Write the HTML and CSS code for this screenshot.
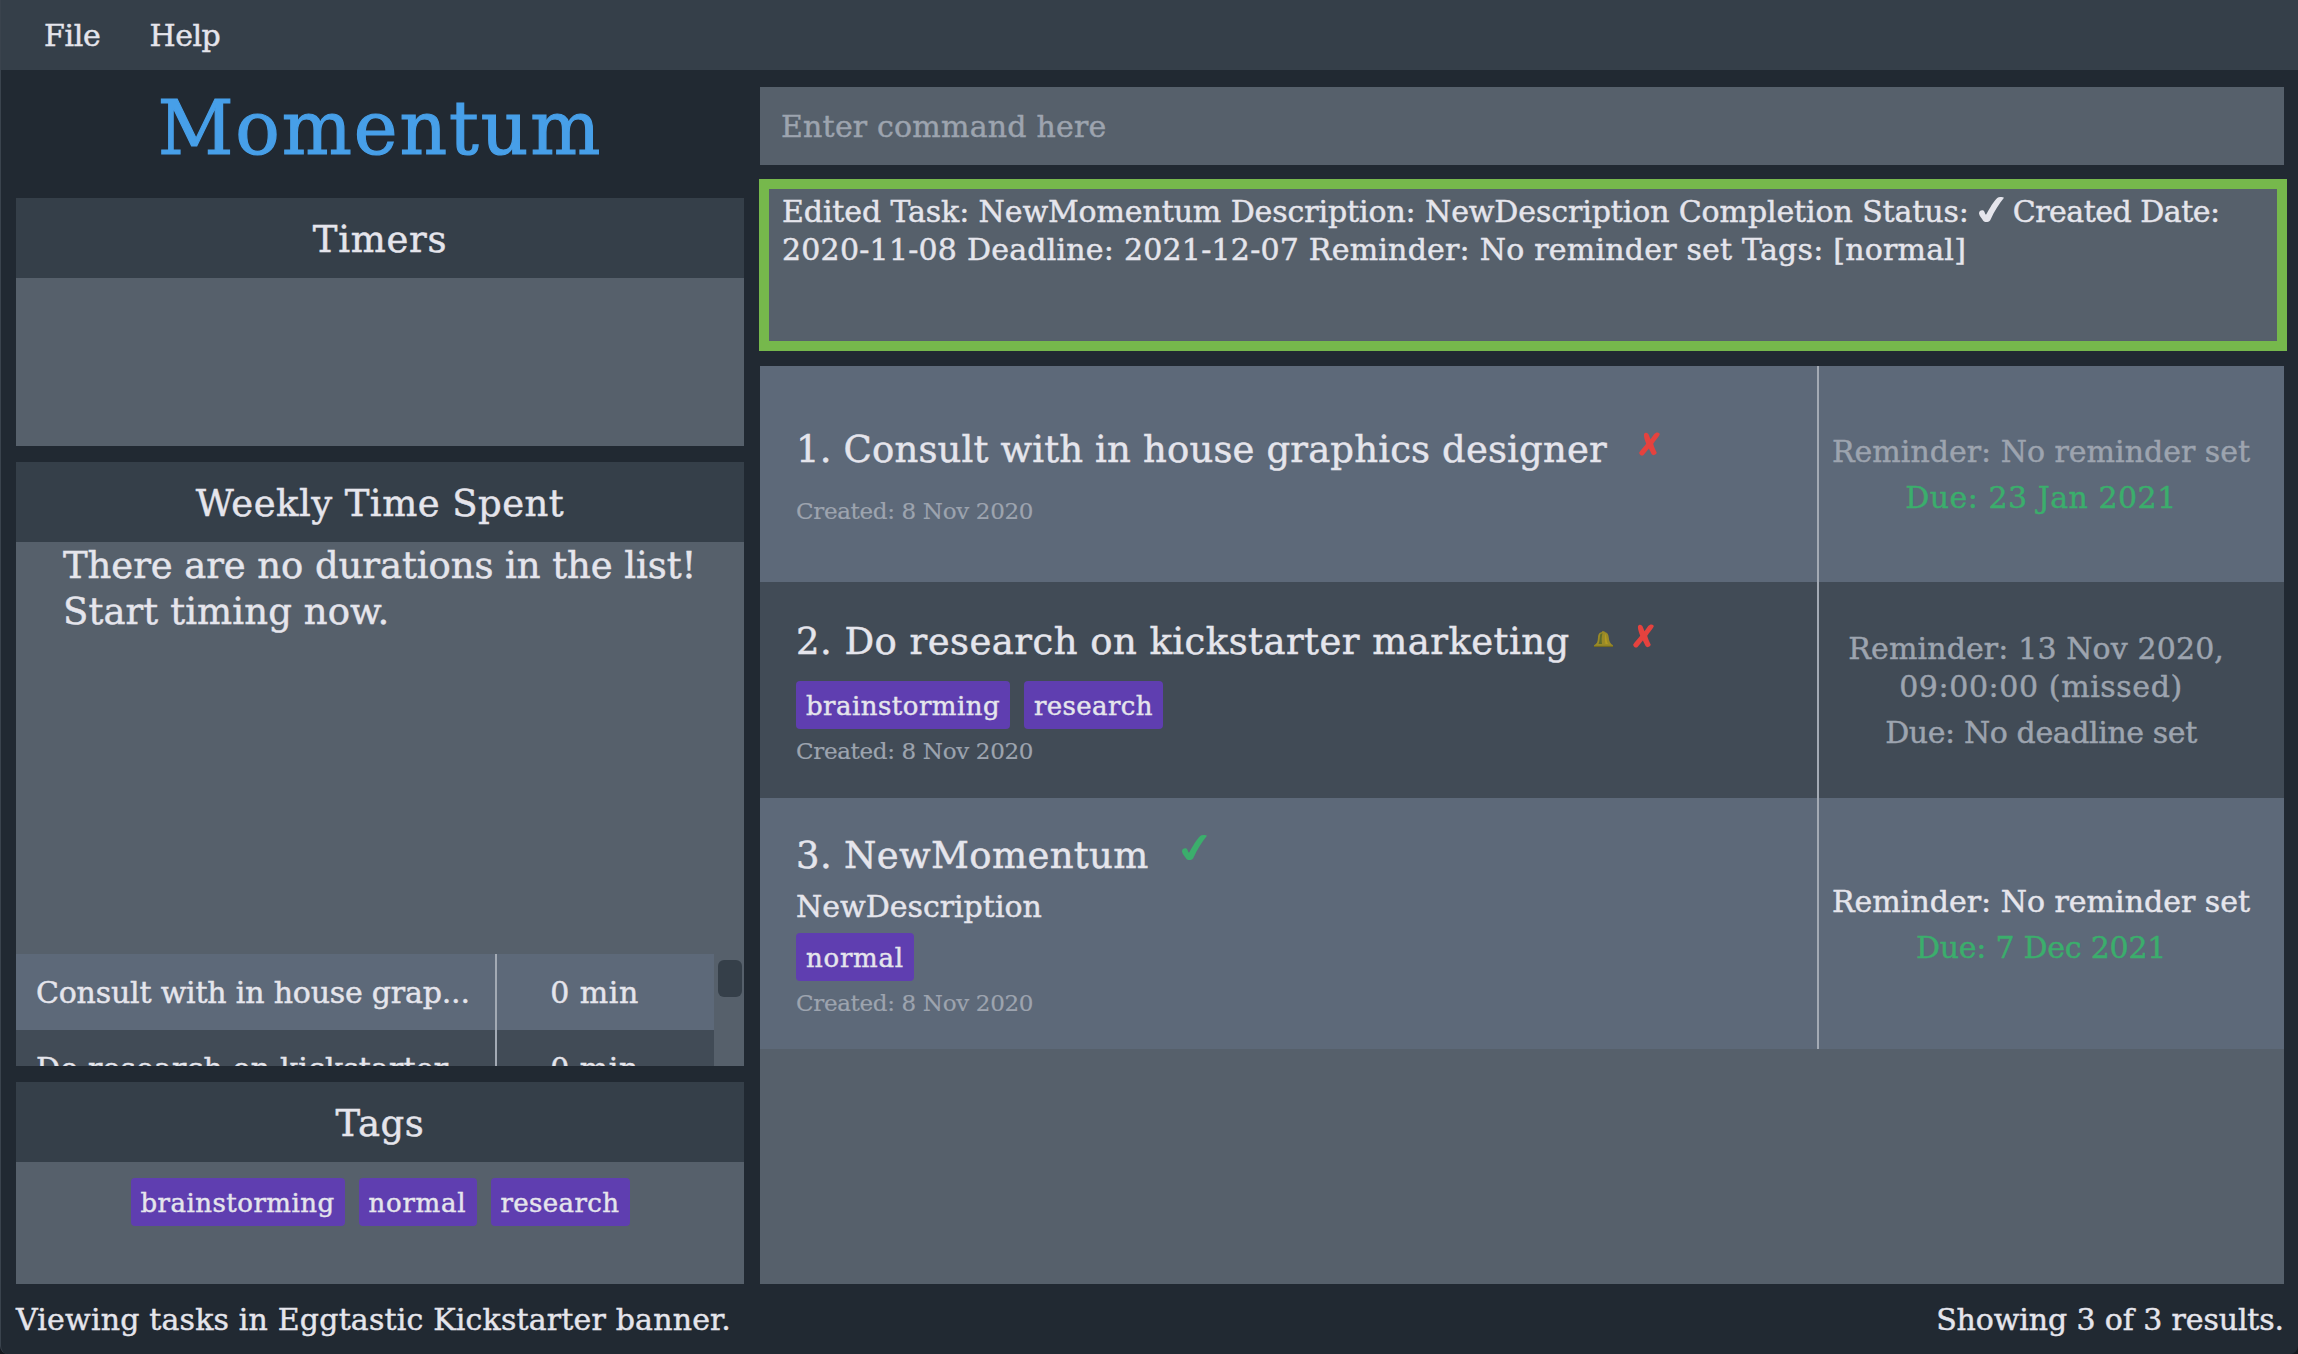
FILE: index.html
```html
<!DOCTYPE html>
<html lang="en">
<head>
<meta charset="utf-8">
<title>Momentum</title>
<link rel="stylesheet" href="styles.css">
</head>
<body>
<svg class="defs" aria-hidden="true">
  <symbol id="cross" viewBox="0 0 21 24"><path d="M5 2.2 C6.5 -.4 9.200 .8 10 3.500 L11.500 7.200 L15.200 2 C17.200 -.6 21 .2 20.700 2.500 C20.500 3.500 16 9 14.200 11.800 C14.800 14.600 16.200 17.300 17.700 20.500 C17.800 22.800 14 24.300 12.600 22 C11.600 20 10.500 18 9.900 16.500 L4.600 23 C2.900 24.700 0 22.500 .2 20.500 C2 17.500 5.500 14.500 7.200 11.800 C6.200 9 4.500 5 5 2.200 Z"/></symbol>
  <symbol id="tick" viewBox="0 0 25 25"><path d="M0 16.500 C-.2 13.200 4.300 12.200 5.400 14.800 C6 16.400 6.300 17.300 7 17.800 C10.500 11.500 14.500 4.500 18.200 1 C19.800 -.3 23.500 -.3 25 .7 C20 6.500 15.500 14 11.600 22.500 C10.400 25.500 5.500 25.900 4.200 23.700 C2.700 21 .2 18.800 0 16.500 Z"/></symbol>
</svg>
<div class="window">
  <nav class="menu"><span class="menu-file">File</span><span class="menu-help">Help</span></nav>
  <div class="main">
    <aside class="left">
      <h1 class="logo">Momentum</h1>
      <section class="panel timers">
        <h2 class="heading heading-timers">Timers</h2>
        <div class="panel-body"></div>
      </section>
      <section class="panel weekly">
        <h2 class="heading heading-weekly">Weekly Time Spent</h2>
        <div class="panel-body">
          <p class="empty"><span class="empty-first">There are no durations in the list!</span><br>Start timing now.</p>
          <div class="durations">
            <div class="duration-rows">
              <div class="duration"><span class="duration-name name-consult">Consult with in house grap...</span><span class="duration-time">0 min</span></div>
              <div class="duration dark"><span class="duration-name name-research">Do research on kickstarter...</span><span class="duration-time">0 min</span></div>
            </div>
            <div class="scroll"><div class="thumb"></div></div>
          </div>
        </div>
      </section>
      <section class="panel tags">
        <h2 class="heading heading-tags">Tags</h2>
        <div class="panel-body tag-list">
          <span class="tag tag-brainstorming">brainstorming</span><span class="tag tag-normal">normal</span><span class="tag tag-research">research</span>
        </div>
      </section>
    </aside>
    <main class="right">
      <div class="command">Enter command here</div>
      <div class="result"><span class="result-a">Edited Task: NewMomentum Description: NewDescription Completion Status:</span><svg class="result-tick"><use href="#tick"/></svg><span class="result-b">Created Date:</span><br><span class="result-c">2020-11-08 Deadline: 2021-12-07 Reminder: No reminder set Tags: [normal]</span></div>
      <div class="tasks">
        <article class="task task-one">
          <div class="info">
            <div class="title"><span class="title-one">1. Consult with in house graphics designer</span><svg class="cross cross-one"><use href="#cross"/></svg></div>
            <div class="created">Created: 8 Nov 2020</div>
          </div>
          <div class="side"><span class="reminder">Reminder: No reminder set</span><span class="due due-jan">Due: 23 Jan 2021</span></div>
        </article>
        <article class="task task-two dark">
          <div class="info">
            <div class="title"><span class="title-two">2. Do research on kickstarter marketing</span>
              <svg class="bell" viewBox="0 0 19 16"><path fill="#9a8a27" d="M0 16 V14.200 C3 13 3.800 10.500 4 6.500 C4.200 2.500 6 1.200 8 1 V.2 H10.500 V1 C13 1.300 14.500 3 14.800 6.500 C15.100 10.500 16.300 12.800 19 14.200 V16 Z"/><path fill="#5d6b2c" d="M6.500 3 C5.500 5 6 10 4.500 13 H8 C7.500 10 7.500 5 8.500 2.200 Z"/><path fill="#b39a22" d="M11 2.500 C13 5 12 10 14 13 H11.500 C10.500 9 11 5 11 2.500 Z"/><path fill="#736a20" d="M0 14.800 H19 V16 H0 Z"/></svg>
              <svg class="cross cross-two"><use href="#cross"/></svg></div>
            <div class="chips"><span class="tag tag-brainstorming">brainstorming</span><span class="tag tag-research">research</span></div>
            <div class="created">Created: 8 Nov 2020</div>
          </div>
          <div class="side"><span class="reminder reminder-nov">Reminder: 13 Nov 2020,&nbsp;<br><span class="missed">09:00:00 (missed)</span></span><span class="due-none">Due: No deadline set</span></div>
        </article>
        <article class="task task-three">
          <div class="info">
            <div class="title"><span class="title-three">3. NewMomentum</span><svg class="tick"><use href="#tick"/></svg></div>
            <div class="description">NewDescription</div>
            <div class="chips"><span class="tag tag-normal">normal</span></div>
            <div class="created">Created: 8 Nov 2020</div>
          </div>
          <div class="side"><span class="reminder done">Reminder: No reminder set</span><span class="due due-dec">Due: 7 Dec 2021</span></div>
        </article>
      </div>
    </main>
  </div>
  <footer class="status"><span class="status-view">Viewing tasks in Eggtastic Kickstarter banner.</span><span class="status-count">Showing 3 of 3 results.</span></footer>
</div>
</body>
</html>
```
FILE: styles.css
```css
* { box-sizing: border-box; }
body {
  margin: 0;
  background: #15191f;
  color: #e5e5ec;
  font: 30px/38px "American Typewriter", "DejaVu Serif", serif;
  -webkit-text-stroke: .45px currentColor;
}
h1, h2, p { margin: 0; font-weight: normal; }
svg { display: block; flex: none; }
.defs { width: 0; height: 0; position: absolute; }

.window {
  width: 2298px;
  height: 1354px;
  display: flex;
  flex-direction: column;
  background: #212932;
  border-left: 1px solid #3a434d;
  border-radius: 0 0 8px 8px;
  white-space: nowrap;
  overflow: hidden;
}
.menu {
  height: 70px;
  padding: 17px 0 0 43px;
  display: flex;
  gap: 49px;
  background: #353f49;
}
.menu-file { letter-spacing: -0.3px; }
.menu-help { letter-spacing: -0.5px; }

.main {
  height: 1214px;
  display: flex;
  gap: 15px;
  padding-left: 15px;
}

/* Left column */
.left { width: 728px; display: flex; flex-direction: column; gap: 16px; }
.logo {
  height: 112px;
  padding-top: 15px;
  text-align: center;
  font-size: 74px;
  line-height: 86px;
  letter-spacing: 1.9px;
  color: #479fe8;
  -webkit-text-stroke-width: 1.2px;
}
.panel { display: flex; flex-direction: column; background: #56606b; }
.panel-body { flex: 1; min-height: 0; }
.timers { height: 248px; }
.weekly { height: 604px; }
.tags { height: 202px; }
.heading {
  height: 80px;
  padding-top: 19px;
  background: #353f49;
  text-align: center;
  font-size: 37px;
  line-height: 46px;
}
.heading-timers { letter-spacing: .7px; }
.heading-weekly { letter-spacing: .45px; }
.heading-tags { letter-spacing: .6px; }

.weekly .panel-body { display: flex; flex-direction: column; justify-content: space-between; }
.empty { padding: 1px 0 0 47px; font-size: 37px; line-height: 46px; letter-spacing: .1px; }
.empty-first { letter-spacing: -.08px; }
.durations { height: 112px; display: flex; overflow: hidden; }
.duration-rows { width: 698px; }
.duration { height: 76px; display: flex; background: #5d6979; }
.duration.dark, .task.dark { background: #414b56; }
.duration-name { width: 481px; padding: 20px 0 0 20px; border-right: 2px solid #a3aab4; }
.name-consult { letter-spacing: -.2px; }
.name-research { letter-spacing: .15px; }
.duration-time { flex: 1; padding: 20px 22px 0 0; text-align: center; letter-spacing: .5px; }
.scroll { flex: 1; padding: 6px 2px 0 4px; }
.thumb { height: 37px; border-radius: 6px; background: #353f49; }

.tag {
  height: 48px;
  padding-left: 10px;
  border-radius: 4px;
  background: #5f3eb0;
  font-size: 26px;
  line-height: 50px;
}
.tag-brainstorming { width: 214px; letter-spacing: .48px; }
.tag-normal { width: 118px; letter-spacing: .75px; }
.tag-research { width: 139px; letter-spacing: .38px; }
.tag-list { display: flex; justify-content: center; gap: 14px; padding-top: 16px; }

/* Right column */
.right { width: 1529px; }
.command {
  width: 1524px;
  height: 78px;
  margin: 17px 0 14px 1px;
  padding: 21px 0 0 21px;
  background: #56606b;
  color: #9da4af;
  letter-spacing: .2px;
}
.result {
  width: 1528px;
  height: 172px;
  padding: 4px 0 0 13px;
  border: solid #76b84c;
  border-width: 10px;
  background: #56606b;
}
.result-a { letter-spacing: -.11px; }
.result-b { letter-spacing: -.5px; }
.result-c { letter-spacing: .22px; }
.result-tick {
  display: inline-block;
  width: 27px;
  height: 25px;
  margin: 0 8px 0 9px;
  vertical-align: baseline;
  fill: #e5e5ec;
}
.tasks { width: 1524px; height: 918px; margin: 15px 0 0 1px; background: #56606b; }
.task { height: 216px; display: flex; background: #5d6979; }
.task-three { height: 251px; }
.info { width: 1059px; padding-left: 36px; border-right: 2px solid #a3aab4; }
.task-one .info { padding-top: 61px; }
.task-two .info { padding-top: 37px; }
.task-three .info { padding-top: 35px; }
.title { display: flex; height: 45px; font-size: 37px; line-height: 46px; }
.title-one { width: 811px; letter-spacing: .15px; }
.title-two { width: 774px; letter-spacing: .46px; }
.title-three { width: 352px; letter-spacing: .35px; }
.cross { width: 21px; height: 24px; margin-top: 5px; fill: #e5423e; }
.cross-one { margin-left: 32px; }
.cross-two { margin-left: 20px; }
.bell { width: 19px; height: 16px; margin: 12px 0 0 24px; }
.tick { width: 25px; height: 25px; margin: 2px 0 0 34px; fill: #3bae6c; }
.chips { display: flex; gap: 14px; margin-top: 17px; }
.description { margin-top: 10px; }
.task-three .chips { margin-top: 7px; }
.created { margin-top: 7px; font-size: 23px; line-height: 30px; letter-spacing: -.33px; color: #9da4af; -webkit-text-stroke-width: .2px; }
.task-one .created { margin-top: 24px; }
.side {
  flex: 1;
  display: flex;
  flex-direction: column;
  justify-content: center;
  gap: 8px;
  padding: 2px 21px 0 0;
  text-align: center;
  color: #9da4af;
}
.done { color: #e5e5ec; }
.due { color: #3bae6c; }
.due-jan { letter-spacing: .5px; }
.due-dec { letter-spacing: -.25px; }
.due-none { letter-spacing: -.4px; }
.reminder-nov { letter-spacing: .12px; }
.missed { letter-spacing: .6px; }

.status {
  height: 70px;
  display: flex;
  justify-content: space-between;
  padding: 17px 14px 0 15px;
}
.status-view { letter-spacing: .18px; }
.status-count { letter-spacing: -.12px; }
```
